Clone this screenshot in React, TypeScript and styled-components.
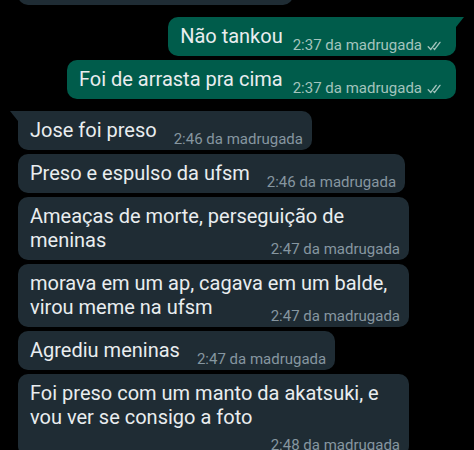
import React from "react";
import styled, { createGlobalStyle, css } from "styled-components";

const Global = createGlobalStyle`
  html, body { margin: 0; padding: 0; background: #000; }
  body { font-family: Roboto, "Noto Sans", "Liberation Sans", sans-serif; }
`;

const Viewport = styled.div`
  width: 474px;
  height: 450px;
  overflow: hidden;
  background: #000;
`;

const List = styled.div`
  display: flex;
  flex-direction: column;
  gap: 4px;
  margin-top: -35px;
`;

const Row = styled.div<{ $out?: boolean; $first?: boolean }>`
  display: flex;
  justify-content: ${(p) => (p.$out ? "flex-end" : "flex-start")};
  padding: 0 18px;
  margin-top: ${(p) => (p.$first ? "8px" : "0")};
`;

const tailIn = css`
  border-top-left-radius: 0;
  &::before {
    content: "";
    position: absolute;
    top: 0;
    left: -8px;
    width: 0;
    height: 0;
    border-top: 10px solid #1f2c34;
    border-left: 8px solid transparent;
  }
`;

const tailOut = css`
  border-top-right-radius: 0;
  &::before {
    content: "";
    position: absolute;
    top: 0;
    right: -8px;
    width: 0;
    height: 0;
    border-top: 10px solid #005c4b;
    border-right: 8px solid transparent;
  }
`;

const Bubble = styled.div<{ $out?: boolean; $tail?: boolean }>`
  position: relative;
  display: flow-root;
  max-width: 391px;
  box-sizing: border-box;
  padding: 7px ${(p) => (p.$out ? 15 : 9)}px 2px 12px;
  border-radius: 10px;
  background: ${(p) => (p.$out ? "#005c4b" : "#1f2c34")};
  color: #e9edef;
  font-size: 20px;
  line-height: 24px;
  ${(p) => p.$tail && (p.$out ? tailOut : tailIn)}
`;

const CutBubble = styled.div`
  width: 275px;
  height: 40px;
  border-radius: 10px;
  background: #1f2c34;
`;

const Meta = styled.span<{ $out?: boolean; $below?: boolean }>`
  float: right;
  display: inline-flex;
  align-items: center;
  gap: 5px;
  margin: 13px 0 0 ${(p) => (p.$out ? 10 : 17)}px;
  font-size: 15px;
  line-height: 17px;
  color: ${(p) => (p.$out ? "#a3c4bd" : "#8696a0")};
  white-space: nowrap;
  ${(p) =>
    p.$below &&
    css`
      float: none;
      display: flex;
      justify-content: flex-end;
      margin: 8px 0 0;
    `}
`;

const Ticks = () => (
  <svg width="14" height="10" viewBox="0 0 14 10" fill="none">
    <path
      d="M1.2 5.8 L3.8 8.4 L9.2 1.4 M6.8 7.6 L7.6 8.4 L13 1.4"
      stroke="currentColor"
      strokeWidth="1.4"
      strokeLinecap="round"
      strokeLinejoin="round"
    />
  </svg>
);

type Msg = {
  text: string;
  time: string;
  out?: boolean;
  first?: boolean;
  below?: boolean;
};

const messages: Msg[] = [
  { text: "Não tankou", time: "2:37 da madrugada", out: true, first: true },
  { text: "Foi de arrasta pra cima", time: "2:37 da madrugada", out: true },
  { text: "Jose foi preso", time: "2:46 da madrugada", first: true },
  { text: "Preso e espulso da ufsm", time: "2:46 da madrugada" },
  { text: "Ameaças de morte, perseguição de meninas", time: "2:47 da madrugada" },
  { text: "morava em um ap, cagava em um balde, virou meme na ufsm", time: "2:47 da madrugada" },
  { text: "Agrediu meninas", time: "2:47 da madrugada" },
  {
    text: "Foi preso com um manto da akatsuki, e vou ver se consigo a foto",
    time: "2:48 da madrugada",
    below: true,
  },
];

export default function App() {
  return (
    <>
      <Global />
      <Viewport>
        <List>
          <Row>
            <CutBubble />
          </Row>
          {messages.map((m, i) => (
            <Row key={i} $out={m.out} $first={m.first}>
              <Bubble $out={m.out} $tail={m.first}>
                <span>{m.text}</span>
                <Meta $out={m.out} $below={m.below}>
                  {m.time}
                  {m.out && <Ticks />}
                </Meta>
              </Bubble>
            </Row>
          ))}
        </List>
      </Viewport>
    </>
  );
}
